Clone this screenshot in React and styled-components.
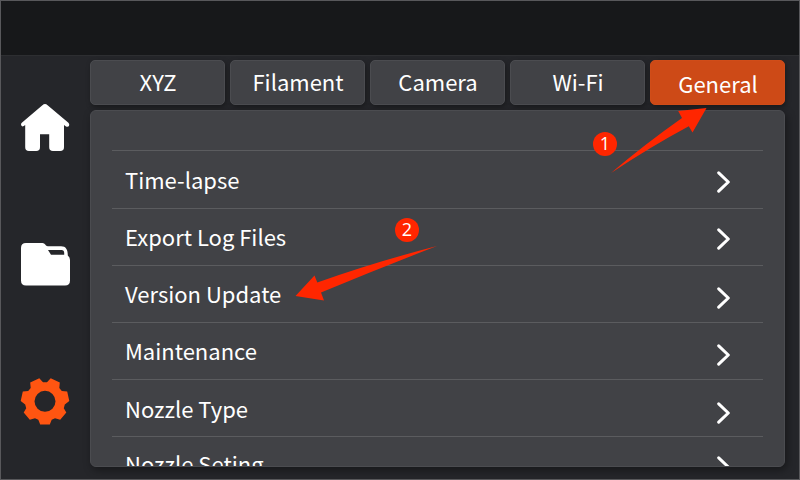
import React from "react";
import styled, { createGlobalStyle } from "styled-components";

const GlobalStyle = createGlobalStyle`
  * { box-sizing: border-box; }
  body { margin: 0; background: #25262a; }
`;

const Screen = styled.div`
  position: relative;
  width: 800px;
  height: 480px;
  display: flex;
  flex-direction: column;
  overflow: hidden;
  background: #25262a;
  border: 1px solid #58585b;
  color: #fff;
  font-family: "Noto Sans CJK SC", "Noto Sans", sans-serif;
  font-size: 22px;
`;

const StatusBar = styled.header`
  height: 55px;
  flex: none;
  background: #17181a;
  border-bottom: 1px solid #2d2e31;
`;

const Body = styled.div`
  flex: 1;
  display: flex;
  min-height: 0;
`;

const Sidebar = styled.nav`
  width: 89px;
  display: flex;
  flex-direction: column;
`;

const NavButton = styled.button`
  height: 137px;
  padding: 0;
  border: 0;
  background: none;
  color: ${(p) => (p.$active ? "#ff5511" : "#fff")};
  svg { display: block; }
`;

const Main = styled.main`
  width: 695px;
  padding-top: 4px;
  display: flex;
  flex-direction: column;
  gap: 5px;
`;

const Tabs = styled.div`
  display: grid;
  grid-template-columns: repeat(5, 135px);
  gap: 5px;
`;

const Tab = styled.button`
  height: 45px;
  padding: 0 0 ${(p) => (p.$active ? 0 : 3)}px 1px;
  border: 1px solid ${(p) => (p.$active ? "#d04d19" : "#4b4c50")};
  border-radius: 5px;
  background: ${(p) => (p.$active ? "#cd4a17" : "#414246")};
  box-shadow: 1px 2px 5px rgba(0, 0, 0, 0.35);
  color: inherit;
  font: inherit;
  line-height: ${(p) => (p.$active ? 44 : 40)}px;
`;

const Panel = styled.section`
  height: 357px;
  padding: 0 21px;
  border: 1px solid #4b4c50;
  border-radius: 6px;
  background: #414246;
  box-shadow: 2px 3px 8px rgba(0, 0, 0, 0.4);
  overflow: hidden;
`;

const ListTop = styled.div`
  height: 40px;
  border-bottom: 1px solid #5b5c5f;
`;

const Row = styled.div`
  height: ${(p) => p.$height}px;
  padding: 0 32px 0 13px;
  display: flex;
  justify-content: space-between;
  align-items: flex-start;
  border-bottom: 1px solid #5b5c5f;
`;

const Label = styled.span`
  margin-top: ${(p) => p.$top}px;
  line-height: 34px;
  white-space: nowrap;
`;

const ChevronIcon = styled.svg`
  margin-top: ${(p) => p.$top}px;
  width: 14px;
  height: 24px;
`;

const Annotations = styled.svg`
  position: absolute;
  left: -1px;
  top: -1px;
  pointer-events: none;
`;

const Badge = styled.span`
  position: absolute;
  left: ${(p) => p.$x}px;
  top: ${(p) => p.$y}px;
  width: 24px;
  height: 24px;
  border-radius: 50%;
  background: #ff2600;
  font-family: "Open Sans", sans-serif;
  font-size: 18px;
  font-weight: 500;
  line-height: 23px;
  text-align: center;
`;

const HomeIcon = () => (
  <svg width="89" height="137" viewBox="1 56 89 137" fill="currentColor">
    <path d="M42.4 105.2Q45 103 47.6 105.2L68.4 122.8Q69.8 124.3 69 126Q67.8 127.4 66 126.4L64 125V147.2Q64 151 60.2 151H53Q49.2 151 49.2 147.2V134.2H40V147.2Q40 151 36.2 151H29Q25.2 151 25.2 147.2V125L23.8 126Q22 127 21.3 125.6Q20.4 124 21.8 122.8Z" />
  </svg>
);

const FolderIcon = () => (
  <svg width="89" height="137" viewBox="1 193 89 137" fill="currentColor">
    <path fillRule="evenodd" d="M26 243H42.5C45 243 45.6 246.2 47.8 246.2H61C66 246.2 67.8 249.5 67.8 255.5Q70 257 70 260V280.5Q70 285.6 65 285.6H26Q21 285.6 21 280.5V248Q21 243 26 243ZM48 250L51 254.8H64.2V253Q64.2 250 61.5 250Z" />
  </svg>
);

const GearIcon = () => (
  <svg width="89" height="137" viewBox="1 330 89 137" fill="currentColor">
    <path
      fillRule="evenodd"
      d="M39.3 378.3L43 382.2H47L50.7 378.3L59.8 382.6L59.3 388L61.8 391L67.2 391.6L69.3 401L64.8 404.4L63.8 408.2L66.3 412.6L60.2 419.8L55 418.3L51.7 419.8L49.8 424.6H40.2L38.3 419.8L35 418.3L29.8 419.8L23.7 412.6L26.2 408.2L25.2 404.4L20.7 401L22.8 391.6L28.2 391L30.7 388L30.2 382.6ZM45 390.8A10.5 10.5 0 1 0 45 411.8A10.5 10.5 0 1 0 45 390.8Z"
    />
  </svg>
);

const tabs = ["XYZ", "Filament", "Camera", "Wi-Fi", "General"];

const rows = [
  { label: "Time-lapse", height: 58, text: 11, chevron: 19 },
  { label: "Export Log Files", height: 57, text: 10, chevron: 18 },
  { label: "Version Update", height: 57, text: 10, chevron: 20 },
  { label: "Maintenance", height: 57, text: 10, chevron: 20 },
  { label: "Nozzle Type", height: 57, text: 11, chevron: 21 },
  { label: "Nozzle Seting", height: 57, text: 9, chevron: 18 },
];

export default function App() {
  return (
    <>
      <GlobalStyle />
      <Screen>
        <StatusBar />
        <Body>
          <Sidebar>
            <NavButton aria-label="Home"><HomeIcon /></NavButton>
            <NavButton aria-label="Files"><FolderIcon /></NavButton>
            <NavButton aria-label="Settings" $active><GearIcon /></NavButton>
          </Sidebar>
          <Main>
            <Tabs>
              {tabs.map((t) => (
                <Tab key={t} $active={t === "General"}>{t}</Tab>
              ))}
            </Tabs>
            <Panel>
              <ListTop />
              {rows.map((r) => (
                <Row key={r.label} $height={r.height}>
                  <Label $top={r.text}>{r.label}</Label>
                  <ChevronIcon $top={r.chevron} viewBox="0 0 14 24">
                    <path d="M1.7 2.8L11.3 12L1.7 21.2" fill="none" stroke="#fff" strokeWidth="3" strokeLinecap="round" strokeLinejoin="round" />
                  </ChevronIcon>
                </Row>
              ))}
            </Panel>
          </Main>
        </Body>
        <Annotations width="800" height="480" fill="#ff2600">
          <path d="M706.5 108L692.5 132.5L688.8 126.2Q650 147 611 173Q645 144 682 118L678.2 111Z" />
          <path d="M295.5 296L314.5 275.5L317.3 282.5Q375 262 437 246Q380 268 321 292.5L324 300.5Z" />
        </Annotations>
        <Badge $x={592} $y={131}>1</Badge>
        <Badge $x={394} $y={217}>2</Badge>
      </Screen>
    </>
  );
}
